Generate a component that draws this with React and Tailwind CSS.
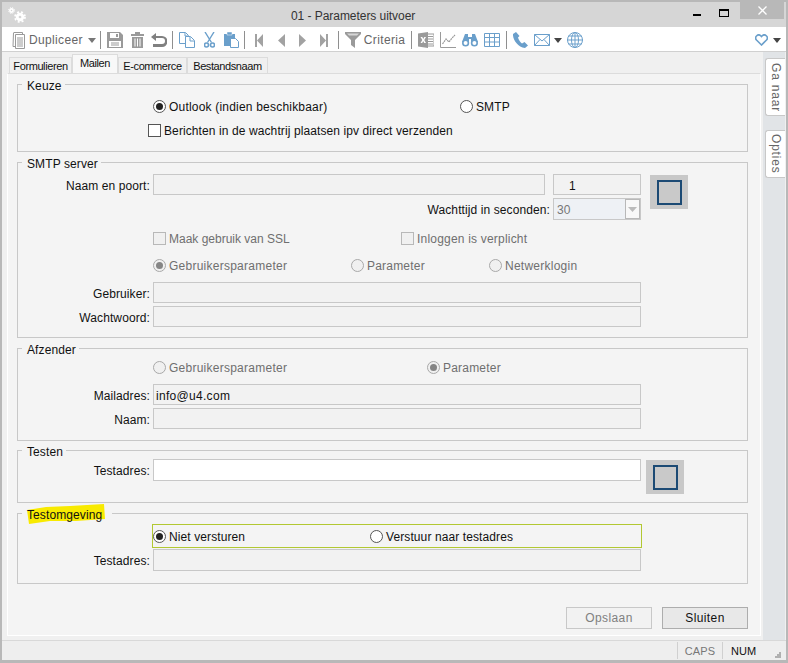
const BLUE = "#6a9fcb";
const GREY = "#9a9a9a";

const Sep = ({ className }) => <span className={`h-[18px] w-px bg-[#8f8f8f] ${className}`} />;

const Arrow = ({ className, fill = "#444" }) => (
  <svg width="8" height="5" viewBox="0 0 8 5" className={className}>
    <path d="M0 0h8L4 5z" fill={fill} />
  </svg>
);

const Radio = ({ checked, disabled }) => (
  <svg width="13" height="13" viewBox="0 0 13 13" className="shrink-0">
    <circle cx="6.5" cy="6.5" r="6" fill={disabled ? "#f0f0f0" : "#fff"} stroke={disabled ? "#a8a8a8" : "#555"} />
    {checked && <circle cx="6.5" cy="6.5" r="3.5" fill={disabled ? "#858585" : "#222"} />}
  </svg>
);

const Check = ({ disabled }) => (
  <span className={`h-[13px] w-[13px] shrink-0 border ${disabled ? "border-[#b8b8b8] bg-[#f0f0f0]" : "border-[#555] bg-white"}`} />
);

const Option = ({ kind = "radio", checked, disabled, label, className = "" }) => (
  <div className={`flex h-4 items-center gap-[3px] ${disabled ? "text-[#6f6f6f]" : "text-[#111]"} ${className}`}>
    {kind === "radio" ? <Radio checked={checked} disabled={disabled} /> : <Check disabled={disabled} />}
    <span className="pt-[2px]">{label}</span>
  </div>
);

const Field = ({ label, value, white, className = "" }) => (
  <div className={`flex items-stretch ${className}`}>
    <label className="mr-[3px] flex w-[132px] items-center justify-end pt-[2px] text-[#111]">{label}</label>
    <div className={`flex w-[488px] items-center border border-[#c8c8c8] pl-[2px] pt-[2px] tracking-[0.3px] text-[#111] ${white ? "bg-white" : "bg-[#f2f2f2]"}`}>
      {value}
    </div>
  </div>
);

const SquareButton = ({ className }) => (
  <div className={`flex h-[34px] w-[38px] items-center justify-center bg-[#c8c8c8] ${className}`}>
    <div className="h-[25px] w-[25px] border-2 border-[#1c4a74] bg-[#c9c9c9]" />
  </div>
);

const Group = ({ title, className, children, highlight }) => (
  <section className={`relative w-[731px] border border-[#c8c8c8] ${className}`}>
    <div className={`absolute -top-[7px] left-[4px] h-4 bg-[#f4f4f4] pl-[5px] leading-4 text-[#111] ${highlight ? "pr-[10px]" : "pr-[3px]"}`}>
      {highlight && (
        <svg width="80" height="20" viewBox="0 0 80 20" className="absolute -top-[3px] left-[4px]">
          <path d="M1 6 20 3 44 2 78 0 79 15 50 17 24 17 3 20Z" fill="#f8ea00" />
        </svg>
      )}
      <span className="relative">{title}</span>
    </div>
    {children}
  </section>
);

// toolbar drawings
const Doc = () => (
  <svg width="15" height="17" viewBox="0 0 15 17" fill="none" stroke={GREY}>
    <path d="M3.5 2.5h9v14h-9z" fill="#fff" /><path d="M1.5 1 1 14.5h2M1.5.5h9v2" />
    <path d="M5 6h6M5 8h6M5 10h6M5 12h6M5 14h6" />
  </svg>
);
const Save = () => (
  <svg width="16" height="16" viewBox="0 0 16 16">
    <path d="M0 0h13l3 3v13H0z" fill={GREY} /><path d="M3 1h9v5H3z" fill="#fff" /><path d="M9 2h2v3H9z" fill={GREY} />
    <path d="M2 9h12v6H2z" fill="#fff" /><path d="M4 10.5h8v1H4zM4 12.5h8v1H4z" fill={GREY} />
  </svg>
);
const Trash = () => (
  <svg width="13" height="16" viewBox="0 0 13 16">
    <path d="M4 0h5v2h4v2H0V2h4z" fill={GREY} /><path d="M1 5h11v11H1z" fill={GREY} />
    <path d="M3.5 6.500h1v8h-1zM6 6.500h1v8H6zM8.500 6.500h1v8h-1z" fill="#fff" />
  </svg>
);
const Undo = () => (
  <svg width="16" height="14" viewBox="0 0 16 14" fill="none">
    <path d="M5 0 0 4l5 4V5h6a2.600 2.600 0 0 1 0 6H2v3h9a5 5 0 0 0 0-11H5z" fill="#808080" />
  </svg>
);
const Copy = () => (
  <svg width="16" height="16" viewBox="0 0 16 16" fill="#fff" stroke={BLUE}>
    <path d="M.5.5h6l3 3v8h-9z" /><path d="M6.500 4.500h5l4 4v7h-9z" /><path d="M11 5v4h4M6 1v3h3" fill="none" />
  </svg>
);
const Cut = () => (
  <svg width="11" height="16" viewBox="0 0 11 16" fill="none" stroke={BLUE} strokeWidth="1.4">
    <path d="M1 0l6.500 10.500M10 0 3.500 10.500" /><circle cx="2.500" cy="13" r="2" strokeWidth="1.6" /><circle cx="8.500" cy="13" r="2" strokeWidth="1.6" />
  </svg>
);
const Paste = () => (
  <svg width="15" height="16" viewBox="0 0 15 16">
    <path d="M0 2h11v12H0z" fill={BLUE} /><path d="M3 0h5v3H3z" fill={BLUE} stroke="#fff" strokeWidth=".5" />
    <path d="M6.500 6.500h5l3 3v6h-8z" fill="#fff" stroke={BLUE} />
  </svg>
);
const Nav = ({ d, w = 8 }) => (
  <svg width={w} height="13" viewBox={`0 0 ${w} 13`}><path d={d} fill="#a2a2a2" /></svg>
);
const Funnel = () => (
  <svg width="16" height="16" viewBox="0 0 16 16">
    <path d="M0 0h16v2L10 8v8L6 13V8L0 2z" fill={GREY} /><path d="M2 1.500h12L12 3.500H4z" fill="#fff" opacity=".6" />
  </svg>
);
const Excel = () => (
  <svg width="16" height="16" viewBox="0 0 16 16">
    <path d="M9 2h7v12H9z" fill="#fff" stroke={GREY} /><path d="M10 4.500h5M10 7h5M10 9.500h5M10 12h5" stroke={GREY} />
    <path d="M0 1.500 10 0v16L0 14.500z" fill={GREY} /><path d="M2.500 5h1.800l1 2 1-2H8L6.300 8 8 11H6.200l-1-2-1 2H2.500l1.800-3z" fill="#fff" />
  </svg>
);
const Chart = () => (
  <svg width="16" height="16" viewBox="0 0 16 16" fill="none" stroke={GREY}>
    <path d="M.5 0v15.500H16" /><path d="M2.500 12 6 7l3 3 3-4 3-3" strokeDasharray="2 .6" strokeWidth="1.2" />
  </svg>
);
const Binoculars = () => (
  <svg width="16" height="13" viewBox="0 0 16 13">
    <path d="M3 0h3v3h4V0h3l3 8H9V5H7v3H0z" fill={BLUE} />
    <circle cx="3.600" cy="9" r="2.800" fill="#fff" stroke={BLUE} strokeWidth="1.6" /><circle cx="12.400" cy="9" r="2.800" fill="#fff" stroke={BLUE} strokeWidth="1.6" />
  </svg>
);
const TableIcon = () => (
  <svg width="16" height="14" viewBox="0 0 16 14" fill="none" stroke={BLUE}>
    <path d="M.5.5h15v13H.5z" /><path d="M0 4.500h16M0 9h16M5.500 0v14M10.500 0v14" />
  </svg>
);
const Phone = () => (
  <svg width="15" height="16" viewBox="0 0 15 16">
    <path d="M3 0 0 2c-.5 5 4.500 13 12 14l3-2.500-3.500-3.500-2.500 1.500C7.500 10.500 5.500 7.500 5 5.500L6.500 4z" fill={BLUE} />
  </svg>
);
const Mail = () => (
  <svg width="16" height="12" viewBox="0 0 16 12" fill="#fff" stroke={BLUE}>
    <path d="M.5.5h15v11H.5z" /><path d="M.5.5 8 7l7.500-6.500M.5 11.500 6 5.500M15.500 11.500 10 5.500" fill="none" />
  </svg>
);
const Globe = () => (
  <svg width="16" height="16" viewBox="0 0 16 16" fill="none" stroke={BLUE}>
    <circle cx="8" cy="8" r="7.500" /><ellipse cx="8" cy="8" rx="3.500" ry="7.500" /><path d="M8 0v16M0 8h16M1.500 4h13M1.500 12h13" />
  </svg>
);

const Gear = ({ size, r, className }) => (
  <svg width={size} height={size} viewBox={`0 0 ${size} ${size}`} fill="none" className={className}>
    <circle cx={size / 2} cy={size / 2} r={r} stroke="#fff" strokeWidth={size / 4.2} />
    <circle cx={size / 2} cy={size / 2} r={size / 2.4} stroke="#fff" strokeWidth={size / 7} strokeDasharray={`${size / 6} ${size / 6}`} />
  </svg>
);

const Tab = ({ label, active, className }) => (
  <div className={`flex items-center justify-center whitespace-nowrap border border-b-0 border-[#dcdcdc] text-[11px] tracking-[-0.4px] text-[#111] ${active ? "h-[19px] bg-[#f8f8f8] pb-[2px]" : "h-4 bg-[#f0f0f0]"} ${className}`}>
    {label}
  </div>
);

const SideTab = ({ label, className }) => (
  <div className={`flex w-5 items-center justify-center rounded-l-[3px] border border-r-0 border-[#c8c8c8] bg-white text-[#666] tracking-[0.8px] [writing-mode:vertical-rl] ${className}`}>
    {label}
  </div>
);

export default function App() {
  return (
    <div className="flex h-[663px] w-[788px] flex-col border-x-2 border-t-2 border-b-[3px] border-[#b8b8b8] bg-[#f0f0f0] font-['Liberation_Sans',Arial,sans-serif] text-[12px] leading-4 tracking-[0.1px]">
      {/* title bar */}
      <div className="flex h-[25px] shrink-0 items-start bg-[#d6d6d6]">
        <div className="relative ml-[6px] mt-[5px] h-[16px] w-[18px]">
          <Gear size={7} r={1.6} className="absolute left-0 top-0" />
          <Gear size={12} r={2.8} className="absolute bottom-0 right-0" />
        </div>
        <div className="ml-[265px] mt-[6px] tracking-[-0.05px] text-[#333]">01 - Parameters uitvoer</div>
        <div className="ml-auto flex items-start">
          <span className="mr-[18px] mt-[12px] h-[2px] w-[8px] bg-black" />
          <span className="mr-[11px] mt-[7px] h-[8px] w-[10px] border border-t-2 border-black" />
          <div className="mr-[2px] flex h-[17px] w-[44px] items-center justify-center bg-[#b8b8b8]">
            <svg width="9" height="9" viewBox="0 0 9 9" stroke="#fff" strokeWidth="1.3"><path d="M.5.5l8 8M8.500.5l-8 8" /></svg>
          </div>
        </div>
      </div>

      {/* toolbar */}
      <div className="flex h-[25px] shrink-0 items-center border-b border-[#d0d0d0] bg-white pl-[10px] pt-[2px] tracking-[0.35px] text-[#666]">
        <Doc />
        <span className="ml-[2px]">Dupliceer</span>
        <Arrow fill="#777" className="ml-[5px]" />
        <Sep className="ml-[4px]" />
        <span className="ml-[6px] flex"><Save /></span>
        <span className="ml-[8px] flex"><Trash /></span>
        <span className="ml-[7px] flex"><Undo /></span>
        <Sep className="ml-[5px]" />
        <span className="ml-[6px] flex"><Copy /></span>
        <span className="ml-[9px] flex"><Cut /></span>
        <span className="ml-[9px] flex"><Paste /></span>
        <Sep className="ml-[5px]" />
        <span className="ml-[10px] flex"><Nav d="M0 0h2v13H0zM8 0v13L2 6.500z" /></span>
        <span className="ml-[15px] flex"><Nav w={7} d="M7 0v13L0 6.500z" /></span>
        <span className="ml-[14px] flex"><Nav w={7} d="M0 0v13l7-6.500z" /></span>
        <span className="ml-[14px] flex"><Nav d="M8 0H6v13h2zM0 0v13l6-6.500z" /></span>
        <Sep className="ml-[10px]" />
        <span className="ml-[6px] flex"><Funnel /></span>
        <span className="ml-[3px]">Criteria</span>
        <Sep className="ml-[6px]" />
        <span className="ml-[6px] flex"><Excel /></span>
        <span className="ml-[6px] flex"><Chart /></span>
        <span className="ml-[6px] flex"><Binoculars /></span>
        <span className="ml-[6px] flex"><TableIcon /></span>
        <Sep className="ml-[6px]" />
        <span className="ml-[6px] flex"><Phone /></span>
        <span className="ml-[6px] flex"><Mail /></span>
        <Arrow className="ml-[4px]" />
        <span className="ml-[5px] flex"><Globe /></span>
        <span className="ml-auto flex">
          <svg width="13" height="12" viewBox="0 0 13 12" fill="none" stroke={BLUE} strokeWidth="1.6">
            <path d="M6.500 11 1.500 6A3 3 0 0 1 6 2l.5.6L7 2a3 3 0 0 1 4.500 4z" />
          </svg>
        </span>
        <Arrow className="ml-[5px] mr-[5px]" />
      </div>

      <div className="flex min-h-0 flex-1">
        {/* tabs + panel */}
        <div className="ml-[5px] flex w-[754px] flex-col">
          <div className="flex h-[21px] shrink-0 items-end pl-[2px]">
            <Tab label="Formulieren" className="w-[63px]" />
            <Tab label="Mailen" active className="w-[46px]" />
            <Tab label="E-commerce" className="w-[69px]" />
            <Tab label="Bestandsnaam" className="w-[81px]" />
          </div>
          <div className="h-[563px] border border-white border-t-[#dcdcdc] bg-[#f4f4f4] pl-[9px] pt-[10px]">
            <Group title="Keuze" className="h-[68px] pt-[13px]">
              <div className="flex pl-[135px]">
                <Option checked label="Outlook (indien beschikbaar)" className="w-[307px] tracking-[0.2px]" />
                <Option label="SMTP" />
              </div>
              <Option kind="check" label="Berichten in de wachtrij plaatsen ipv direct verzenden" className="ml-[130px] mt-2" />
            </Group>

            <Group title="SMTP server" className="mt-[10px] h-[176px] pt-[11px]">
              <div className="flex h-[46px] items-start">
                <div className="w-[623px]">
                  <div className="flex h-[21px]">
                    <label className="mr-[3px] flex w-[132px] items-center justify-end pt-[2px] text-[#111]">Naam en poort:</label>
                    <div className="w-[392px] border border-[#c8c8c8] bg-[#f2f2f2]" />
                    <div className="ml-[8px] flex w-[88px] items-center border border-[#c8c8c8] bg-[#f2f2f2] pl-[15px] pt-[2px] text-[#111]">1</div>
                  </div>
                  <div className="mt-[3px] flex h-[22px]">
                    <label className="mr-[3px] flex w-[532px] items-center justify-end pt-[2px] text-[#111]">Wachttijd in seconden:</label>
                    <div className="flex w-[88px] border border-[#c8c8c8] bg-[#eef1f5] pl-[3px] text-[#777]">
                      <span className="flex-1 self-center pt-[2px]">30</span>
                      <span className="flex w-[15px] items-center justify-center border border-[#b8b8b8] bg-[#f8f8f8]">
                        <svg width="9" height="5" viewBox="0 0 9 5"><path d="M0 0h9L4.500 5z" fill="#bbb" /></svg>
                      </span>
                    </div>
                  </div>
                </div>
                <SquareButton className="ml-[9px] mt-px" />
              </div>
              <div className="mt-[10px] flex pl-[135px]">
                <Option kind="check" disabled label="Maak gebruik van SSL" className="w-[248px] tracking-normal" />
                <Option kind="check" disabled label="Inloggen is verplicht" className="tracking-[0.2px]" />
              </div>
              <div className="mt-[11px] flex pl-[135px]">
                <Option checked disabled label="Gebruikersparameter" className="w-[198px] tracking-[0.25px]" />
                <Option disabled label="Parameter" className="w-[138px] tracking-[0.2px]" />
                <Option disabled label="Netwerklogin" className="tracking-[0.25px]" />
              </div>
              <Field label="Gebruiker:" className="mt-[9px] h-[21px]" />
              <Field label="Wachtwoord:" className="mt-[3px] h-[21px]" />
            </Group>

            <Group title="Afzender" className="mt-[10px] h-[93px] pt-[10px]">
              <div className="flex pl-[135px]">
                <Option disabled label="Gebruikersparameter" className="w-[274px] tracking-[0.25px]" />
                <Option checked disabled label="Parameter" className="tracking-[0.2px]" />
              </div>
              <Field label="Mailadres:" value="info@u4.com" className="mt-[9px] h-[21px]" />
              <Field label="Naam:" className="mt-[3px] h-[21px]" />
            </Group>

            <Group title="Testen" className="mt-[9px] h-[53px] pt-[8px]">
              <div className="flex items-start">
                <Field label="Testadres:" white className="h-[22px]" />
                <SquareButton className="ml-[5px] mt-px" />
              </div>
            </Group>

            <Group title="Testomgeving" highlight className="mt-[10px] h-[71px] pt-[10px]">
              <div className="ml-[134px] flex h-[24px] w-[490px] items-center border border-[#b2c832]">
                <Option checked label="Niet versturen" className="w-[217px]" />
                <Option label="Verstuur naar testadres" />
              </div>
              <Field label="Testadres:" className="mt-px h-[22px]" />
            </Group>

            <div className="mt-[23px] flex w-[731px] justify-end gap-[10px]">
              <button className="h-[22px] w-[86px] border border-[#c8c8c8] bg-[#f2f2f2] tracking-[0.4px] text-[#808080]">Opslaan</button>
              <button className="h-[22px] w-[86px] border border-[#adadad] bg-[#e8e8e8] tracking-[0.4px] text-[#111]">Sluiten</button>
            </div>
          </div>
        </div>

        {/* side tabs */}
        <div className="ml-[2px] flex w-[22px] flex-col items-start bg-[#e1e4e7] pl-[2px] pt-[6px]">
          <SideTab label="Ga naar" className="h-[58px]" />
          <SideTab label="Opties" className="mt-[14px] h-[48px]" />
        </div>
      </div>

      {/* status bar */}
      <div className="flex h-[20px] shrink-0 items-center justify-end border-t border-[#d8d8d8] bg-[#eeeeee]">
        <div className="flex h-[17px] w-[45px] items-center justify-center border-l border-[#d0d0d0] text-[11px] text-[#777]">CAPS</div>
        <div className="flex h-[17px] w-[64px] items-center border-l border-[#d0d0d0] pl-2 text-[11px] text-[#111]">NUM
          <svg width="6" height="6" viewBox="0 0 6 6" className="ml-[19px] mt-[8px]" fill="#b0b0b0">
            <path d="M4 0h2v2H4zM2 2h2v2H2zM4 2h2v2H4zM0 4h2v2H0zM2 4h2v2H2zM4 4h2v2H4z" />
          </svg>
        </div>
      </div>
    </div>
  );
}
